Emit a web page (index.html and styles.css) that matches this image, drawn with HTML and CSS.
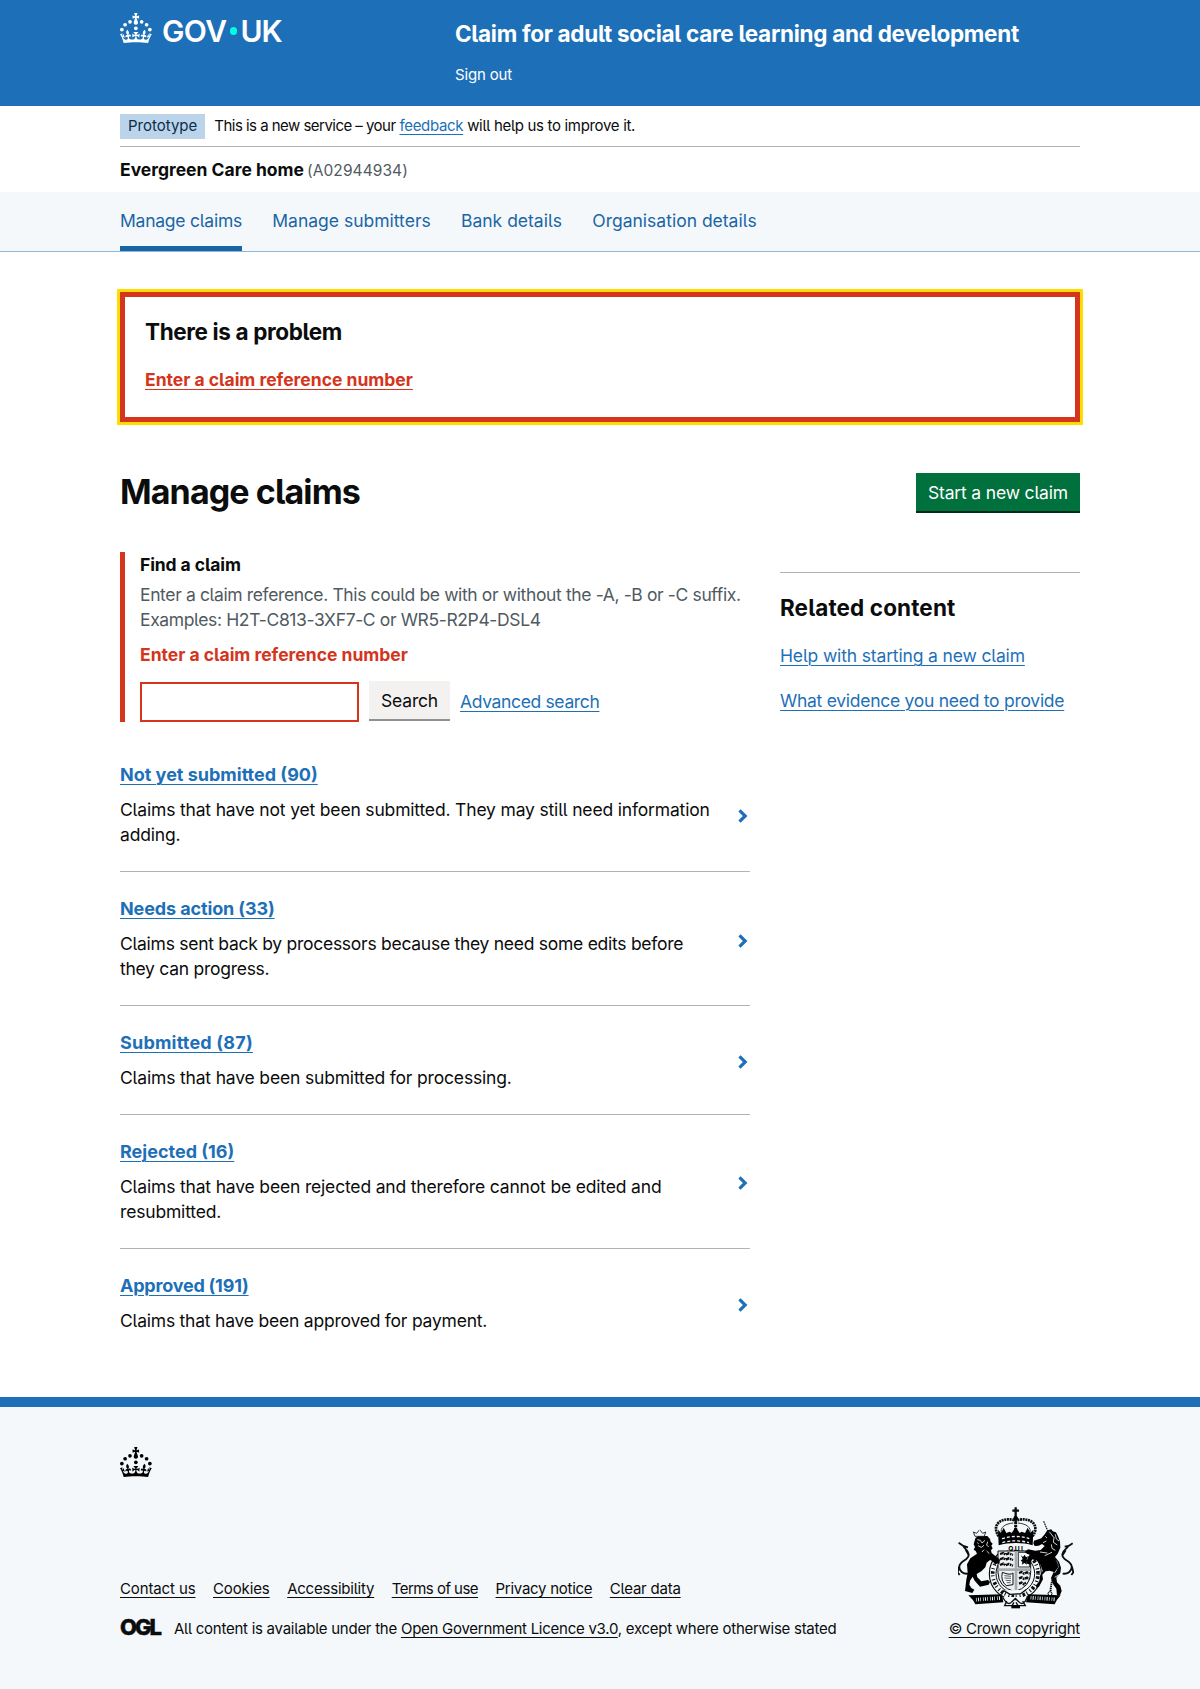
FILE: index.html
```html
<!DOCTYPE html>
<html lang="en">
<head>
<meta charset="utf-8">
<title>Manage claims</title>
<link rel="stylesheet" href="styles.css">
</head>
<body>
<svg class="sprite" aria-hidden="true">
  <symbol id="crown" viewBox="0 0 64 60">
    <circle cx="20" cy="17.6" r="3.7"/><circle cx="10.2" cy="23.5" r="3.7"/><circle cx="3.7" cy="33.2" r="3.7"/><circle cx="31.7" cy="30.6" r="3.7"/><circle cx="43.3" cy="17.6" r="3.7"/><circle cx="53.2" cy="23.5" r="3.7"/><circle cx="59.7" cy="33.2" r="3.7"/>
    <path d="M33.1,9.8c.2-.1.3-.3.5-.5l4.6,2.4v-6.8l-4.6,1.5c-.1-.2-.3-.3-.5-.5l1.9-5.9h-6.7l1.9,5.9c-.2.1-.3.3-.5.5l-4.6-1.5v6.8l4.6-2.4c.1.2.3.3.5.5l-2.6,8c-.9,2.8,1.2,5.7,4.1,5.7h0c3,0,5.1-2.9,4.1-5.7l-2.6-8ZM37,37.9s-3.4,3.8-4.1,6.1c2.2,0,4.2-.5,6.4-2.8l-.7,8.5c-2-2.8-4.4-4.1-5.7-3.8.1,3.1.5,6.7,5.8,7.2,3.7.3,6.7-1.5,7-3.8.4-2.6-2-4.3-3.7-1.6-1.4-4.5,2.4-6.1,4.9-3.2-1.9-4.5-1.8-7.7,2.4-10.9,3,4,2.6,7.3-1.2,11.1,2.4-1.3,6.2,0,4,4.6-1.2-2.8-3.7-2.2-4.2.2-.3,1.7.7,3.7,3,4.2,1.9.3,4.7-.9,7-5.9-1.3,0-2.4.7-3.9,1.7l2.4-8c.6,2.3,1.4,3.7,2.2,4.5.6-1.6.5-2.8,0-5.3l5,1.8c-2.6,3.6-5.2,8.7-7.3,17.5-7.4-1.1-15.7-1.7-24.5-1.7h0c-8.8,0-17.1.6-24.5,1.7-2.1-8.9-4.7-13.9-7.3-17.5l5-1.8c-.5,2.5-.6,3.7,0,5.3.8-.8,1.6-2.3,2.2-4.5l2.4,8c-1.5-1-2.6-1.7-3.9-1.7,2.3,5,5.2,6.2,7,5.9,2.3-.4,3.3-2.4,3-4.2-.5-2.4-3-3.1-4.2-.2-2.2-4.6,1.6-6,4-4.6-3.7-3.7-4.2-7.1-1.2-11.1,4.2,3.2,4.3,6.4,2.4,10.9,2.5-2.8,6.3-1.3,4.9,3.2-1.8-2.7-4.1-1-3.7,1.6.3,2.3,3.3,4.1,7,3.8,5.4-.5,5.7-4.2,5.8-7.2-1.3-.2-3.7,1-5.7,3.8l-.7-8.5c2.2,2.3,4.2,2.7,6.4,2.8-.7-2.3-4.1-6.1-4.1-6.1h10.6Z"/>
  </symbol>
  <symbol id="chevron" viewBox="0 0 10 14"><path d="M1.500 1.300 7.200 7l-5.700 5.700" fill="none" stroke="currentColor" stroke-width="3.200"/></symbol>
</svg>

<header class="header">
  <div class="container header-grid">
    <a class="logo" aria-label="GOV.UK">
      <svg class="logo-crown"><use href="#crown"/></svg>
      <span class="gov">GOV</span><span class="logo-dot"></span><span class="uk">UK</span>
    </a>
    <div class="header-content">
      <div class="service-name">Claim for adult social care learning and development</div>
      <a class="sign-out">Sign out</a>
    </div>
  </div>
</header>

<div class="container">
  <div class="phase">
    <strong class="tag">Prototype</strong>
    <span class="phase-text"><span class="ls-5">This is a new service – your</span> <a class="link">feedback</a> will help us to improve it.</span>
  </div>
  <div class="organisation"><strong>Evergreen Care home</strong><span class="org-id">(A02944934)</span></div>
</div>

<nav class="nav">
  <div class="container nav-list">
    <a class="nav-item nav-current">Manage claims</a>
    <a class="nav-item">Manage submitters</a>
    <a class="nav-item">Bank details</a>
    <a class="nav-item">Organisation details</a>
  </div>
</nav>

<main class="container main">
  <section class="error-summary">
    <h2 class="heading-m problem">There is a problem</h2>
    <a class="link error-link">Enter a claim reference number</a>
  </section>

  <div class="title-row">
    <h1>Manage claims</h1>
    <button class="button" type="button">Start a new claim</button>
  </div>

  <div class="columns">
    <div class="column-main">
      <form class="form-group">
        <label class="label" for="ref">Find a claim</label>
        <div class="hint">Enter a claim reference. This could be with or without the -A, -B or -C suffix.<br>Examples: H2T-C813-3XF7-C or WR5-R2P4-DSL4</div>
        <p class="error-message">Enter a claim reference number</p>
        <div class="search-row">
          <input class="input" id="ref" type="text">
          <button class="button button-secondary" type="button">Search</button>
          <a class="link advanced">Advanced search</a>
        </div>
      </form>

      <ul class="claims">
        <li class="claim"><div><a class="link claim-title">Not yet submitted (90)</a><p class="claim-text">Claims that have not yet been submitted. They may still need information<br>adding.</p></div><svg class="chevron"><use href="#chevron"/></svg></li>
        <li class="claim"><div><a class="link claim-title ls-1">Needs action (33)</a><p class="claim-text ls-3">Claims sent back by processors because they need some edits before<br>they can progress.</p></div><svg class="chevron"><use href="#chevron"/></svg></li>
        <li class="claim"><div><a class="link claim-title ls-wide">Submitted (87)</a><p class="claim-text">Claims that have been submitted for processing.</p></div><svg class="chevron"><use href="#chevron"/></svg></li>
        <li class="claim"><div><a class="link claim-title">Rejected (16)</a><p class="claim-text">Claims that have been rejected and therefore cannot be edited and<br>resubmitted.</p></div><svg class="chevron"><use href="#chevron"/></svg></li>
        <li class="claim"><div><a class="link claim-title ls-2">Approved (191)</a><p class="claim-text ls-2">Claims that have been approved for payment.</p></div><svg class="chevron"><use href="#chevron"/></svg></li>
      </ul>
    </div>

    <aside class="related">
      <h2 class="heading-m related-heading">Related content</h2>
      <a class="link related-link">Help with starting a new claim</a>
      <a class="link related-link ls-3">What evidence you need to provide</a>
    </aside>
  </div>
</main>

<footer class="footer">
  <div class="container">
    <svg class="footer-crown"><use href="#crown"/></svg>
    <div class="footer-row">
      <div>
        <div class="footer-links">
          <a class="link ls-1">Contact us</a><a class="link ls-1">Cookies</a><a class="link ls-2">Accessibility</a><a class="link ls-5">Terms of use</a><a class="link ls-3">Privacy notice</a><a class="link ls-2">Clear data</a>
        </div>
        <div class="licence"><span class="ogl">OGL</span><span>All content is available under the <a class="link">Open Government Licence v3.0</a>, except where otherwise stated</span></div>
      </div>
      <div class="copyright">
        <svg class="arms" viewBox="54 36 348 306" aria-hidden="true">
          <!-- royal crown -->
          <g fill="none" stroke="#0b0c0c">
            <path d="M227 37v29M217 47h20" stroke-width="7"/>
            <path d="M176 124C150 84 192 64 227 77c35-13 77 7 51 47" stroke-width="8" stroke-dasharray="6 2"/>
            <path d="M186 118c-10-22 12-32 34-34M268 118c10-22-12-32-34-34" stroke-width="2.500"/>
            <path d="M227 72v34" stroke-width="9" stroke-dasharray="7 2"/>
          </g>
          <circle cx="227" cy="70" r="7"/>
          <path d="M174 104l9 10 8-16 8 16 10-4 6 4 12-18 12 18 6-4 10 4 8-16 8 16 9-10-2 47c-30-9-72-9-102 0Z"/>
          <path d="M186 131q41-13 82 0M187 143q40-11 80 0" fill="none" stroke="#f4f8fb" stroke-width="4" stroke-dasharray="9 6"/>
          <!-- garter -->
          <circle cx="226" cy="236" r="78" fill="#f4f8fb" stroke="#0b0c0c" stroke-width="3.500"/>
          <circle cx="226" cy="236" r="58" fill="#f4f8fb" stroke="#0b0c0c" stroke-width="3"/>
          <circle cx="226" cy="236" r="68" fill="none" stroke="#0b0c0c" stroke-width="11" stroke-dasharray="3 5 8 6 3 9"/>
          <path d="M182 152h88v18q-44-12-88 0Z" fill="#f4f8fb"/>
          <text x="229" y="168" text-anchor="middle" font-size="20" font-weight="700" letter-spacing="4">QUI</text>
          <!-- quartered shield -->
          <path d="M174 168h98v64q0 44-48 58-50-14-50-58Z" fill="#eceff1" stroke="#0b0c0c" stroke-width="3"/>
          <path d="M228 168v120M174 224h98" stroke="#a8abae" stroke-width="8"/>
          <path d="M180 177l10-3 7 5 9-4 13 5M180 193l10-4 7 5 9-4 13 5M180 210l10-4 7 5 9-4 13 5M237 234l8-3 7 5 9-4 8 4M237 250l8-3 7 5 9-4 6 4M237 266l8-3 7 5 6-5" fill="none" stroke="#0b0c0c" stroke-width="7" stroke-dasharray="11 2 5 2"/>
          <path d="M235 172h34v44h-34Z" fill="#f4f8fb" stroke="#0b0c0c" stroke-width="2.500"/>
          <path d="M243 181l6 5 5-7 4 8 6-3-4 10 5 4-7 3 3 8-8-5-7 5 1-9-5-3 6-5Z"/>
          <path d="M187 232q-6 26 12 40l20-3V234q-8 8-32-2Z" fill="#f4f8fb" stroke="#0b0c0c" stroke-width="3"/>
          <path d="M193 242l20 2M193 249l20 1M197 256l16 1M200 263l12 0" stroke="#0b0c0c" stroke-width="2"/>
          <!-- lion -->
          <path d="M106 130l8-7h28l8 9 2 8 6 6-4 6 4 8-5 6 2 8 12 10 13 10-2 14-6-4-6 5-8-10-8-4-10 8-4 14-12 12-14 8 2 10 12 12 20-4 6 6-4 8-26 6-16-18-6-12-8 12-2 12 6 10 9 5-6 10-22-6 4-34 4-20-2-26 10-18 20-14-4-8-6-4 4-8-4-8Z"/>
          <path d="M105 124l-5-13 10 4 9-11 9 11 9-4-4 13Z" fill="#f4f8fb" stroke="#0b0c0c" stroke-width="2.500"/>
          <path d="M119 102v12M112 134l9 2 5 8 9-8M114 152l10 5 8-6M143 140l-3 10 6 6M132 164l-6 7M112 143l4 3M140 168l8 8" fill="none" stroke="#f4f8fb" stroke-width="2.500"/>
          <path d="M85 236c-16 2-28-8-27-22 2-18 30-18 28-36-1-14-12-14-16-26M56 143l14 10 14 4M86 180l-9-16M57 216l-4 16 6 8" fill="none" stroke="#0b0c0c" stroke-width="5.500"/>
          <!-- unicorn -->
          <path d="M311 79l12 28" stroke="#0b0c0c" stroke-width="3.500" stroke-dasharray="5 2"/>
          <path d="M304 130l10-12 8-12 12-3 4 6 10 3 6 12 6 16 1 18-8 18-8 10 12 14 6 18-2 16-12 14 2 14 10 10 4 16-5 13h-9l-2-20-10-14-6-18 8-18-12-4-12 2-10 10 2 14-12 22-8 4-1-8 10-12 2-16 8-16-6-16-10-14-16-4-6 16-12-4 6-20 8-6-10-2-8-6 10-8 22 4 16-2 12-12-8-6-10 5-12 1-4-8 2-8Z"/>
          <path d="M328 110l14 18-2 14 12 8M346 118l3 14 8 6M316 124l5 5M309 143l10-5M334 148l2 12 10 6M336 172l-22 10M300 171l22 3M350 196l6 20-12 18M356 240l-14 8" fill="none" stroke="#f4f8fb" stroke-width="2.500"/>
          <path d="M368 236c16 2 28-8 27-22-2-18-30-18-28-36 1-14 14-14 18-26M398 145l-12 8-12 2M368 180l9-14M396 216l4 16-6 8" fill="none" stroke="#0b0c0c" stroke-width="5.500"/>
          <path d="M342 190q22 24 6 46t-16 52" fill="none" stroke="#0b0c0c" stroke-width="6" stroke-dasharray="4 2"/>
          <circle cx="330" cy="296" r="6" fill="#f4f8fb" stroke="#0b0c0c" stroke-width="3"/>
          <!-- motto scroll -->
          <path d="M85 301l101-3 4 24-84 6q-6-14-21-27ZM362 301l-98-3-6 24 86 6q6-14 18-27Z"/>
          <path d="M108 314l72-5M272 308l72 5" stroke="#f4f8fb" stroke-width="11" stroke-dasharray="2 4 3 4 2 6"/>
          <path d="M190 286l20 12 32-2 16-12M188 306q16 30 28 14l10-10 10 10q14 16 26-14M200 318l-6 14h22l6-10M248 318l8 14h-22l-6-10" fill="#f4f8fb" stroke="#0b0c0c" stroke-width="4"/>
          <path d="M214 330h26v10h-26Z"/>
        </svg>
        <a class="link">© Crown copyright</a>
      </div>
    </div>
  </div>
</footer>
</body>
</html>
```
FILE: styles.css
```css
* { box-sizing: border-box; }
body {
  margin: 0;
  background: #fff;
  color: #0b0c0c;
  font-family: Inter, "Noto Sans", sans-serif;
  font-size: 17.5px;
  line-height: 25px;
  font-feature-settings: "cv05";
}
h1, h2, p, ul { margin: 0; padding: 0; }
ul { list-style: none; }
svg { display: block; }
.sprite { display: none; }
.container { width: 960px; margin: 0 auto; }

.link {
  color: #1d70b8;
  text-decoration: underline;
  text-decoration-thickness: 1px;
  text-underline-offset: 3px;
}

/* header */
.header { height: 106px; background: #1d70b8; color: #fff; }
.header-grid { display: grid; grid-template-columns: 335px 1fr; }
.logo { display: flex; height: 30px; margin-top: 13px; align-items: center; }
.logo-crown { width: 32px; height: 30px; fill: #fff; margin-right: 10px; }
.gov, .uk { font-size: 30px; line-height: 30px; font-weight: 600; padding-top: 6px; }
.gov { letter-spacing: -0.6px; width: 66px; }
.uk { letter-spacing: -1px; }
.logo-dot { width: 7.4px; height: 7.4px; margin: 6px 3px 0 2px; border-radius: 50%; background: #00ffe0; }
.header-content { padding-top: 19px; }
.service-name { font-size: 22.5px; line-height: 30px; font-weight: 700; letter-spacing: -0.28px; }
.sign-out { display: block; margin-top: 16px; font-size: 15px; line-height: 20px; letter-spacing: -0.17px; }

/* phase banner */
.phase {
  display: flex;
  gap: 9px;
  padding: 8px 0 7px;
  border-bottom: 1px solid #b1b4b6;
  font-size: 15px;
  line-height: 23px;
}
.tag { padding: 0 8px 2px; background: #bbd4ea; color: #0c2d4a; font-weight: 400; }
.phase-text { letter-spacing: -0.32px; }
.organisation { display: flex; align-items: baseline; gap: 3px; padding: 10px 0 9px; }
.org-id { color: #505a5f; font-size: 15.5px; letter-spacing: 0.08px; }

/* service navigation */
.nav { background: #f4f8fb; border-bottom: 1px solid #8eb8dc; }
.nav-list { display: flex; gap: 30.3px; }
.nav-item { padding: 16px 0 13px; border-bottom: 5px solid transparent; color: #1a65a6; }
.nav-current { border-color: #1a65a6; letter-spacing: -0.24px; }

.main { padding: 40px 0 64px; }
.heading-m { font-size: 22.5px; line-height: 30px; font-weight: 700; }
.problem { letter-spacing: -0.36px; }
.related-heading { letter-spacing: 0.12px; }

.error-summary {
  padding: 20px 20px 25px;
  border: 5px solid #d4351c;
  outline: 3px solid #ffdd00;
}
.error-link { display: block; width: fit-content; margin-top: 20px; color: #d4351c; font-weight: 700; }

.title-row { display: flex; justify-content: space-between; margin-top: 50px; height: 40px; }
h1 { font-size: 34px; line-height: 40px; letter-spacing: -0.9px; }
.button {
  width: 164px;
  height: 38px;
  margin-top: 1px;
  padding: 1px 0 0;
  border: 0;
  background: #00703c;
  box-shadow: 0 2px 0 #002d18;
  color: #fff;
  font: inherit;
  letter-spacing: -0.16px;
}
.button-secondary { width: 81px; margin-top: -1px; background: #f3f2f1; color: #0b0c0c; box-shadow: 0 2px 0 #929191; }

.columns { display: grid; grid-template-columns: 630px 300px; gap: 30px; }
.form-group { height: 170px; margin-top: 40px; padding-left: 15px; border-left: 5px solid #d4351c; }
.label { display: block; font-weight: 700; letter-spacing: -0.1px; }
.hint { margin-top: 5px; color: #505a5f; letter-spacing: -0.37px; white-space: nowrap; }
.error-message { margin-top: 10px; color: #d4351c; font-weight: 700; }
.search-row { display: flex; gap: 10px; margin-top: 15px; }
.input { width: 219px; height: 40px; padding: 5px; border: 2px solid #d4351c; border-radius: 0; background: #fff; }
.advanced { padding-top: 7px; letter-spacing: -0.35px; }

/* claims list */
.claims { margin-top: 41px; }
.claim { display: flex; justify-content: space-between; align-items: center; padding: 25px 0 24px; border-bottom: 1px solid #b1b4b6; }
.claim:first-child { padding-top: 0; }
.claim:last-child { padding-bottom: 0; border-bottom: 0; }
.claim-title { display: block; width: fit-content; font-size: 18px; line-height: 23px; font-weight: 700; text-underline-offset: 2.500px; }
.claim-text { margin-top: 11px; letter-spacing: -0.17px; }
.chevron { width: 10px; height: 14px; margin: 4px 2px 0 0; color: #1d70b8; }
.claim:first-child .chevron { margin-top: 22px; }
.claim:nth-child(n+3) .chevron { margin-top: 2px; }

.related { align-self: start; margin-top: 60px; padding-top: 20px; border-top: 1px solid #b1b4b6; }
.related-link { display: block; width: fit-content; margin-top: 20px; letter-spacing: -0.15px; }

/* footer */
.footer { height: 292px; padding-top: 40px; border-top: 10px solid #1d70b8; background: #f4f8fb; font-size: 15px; line-height: 20px; letter-spacing: -0.26px; }
.footer .link { color: #0b0c0c; }
.footer-crown { width: 32px; height: 30px; }
.footer-row { display: flex; justify-content: space-between; align-items: flex-end; margin-top: 30px; }
.footer-links { display: flex; gap: 17.500px; }
.licence { display: flex; gap: 13px; margin-top: 20px; }
.ogl { width: 41px; font-size: 22px; font-weight: 800; letter-spacing: -2px; line-height: 16px; -webkit-text-stroke: 0.5px #0b0c0c; }
.copyright { display: flex; flex-direction: column; align-items: flex-end; }
.arms { width: 116px; height: 102px; margin: 0 6px 10px 0; }

/* small tracking adjustments */
.ls-wide { letter-spacing: 0.2px; }
.ls-1 { letter-spacing: -0.12px; }
.ls-2 { letter-spacing: -0.22px; }
.ls-3 { letter-spacing: -0.27px; }
.ls-5 { letter-spacing: -0.53px; }
```
